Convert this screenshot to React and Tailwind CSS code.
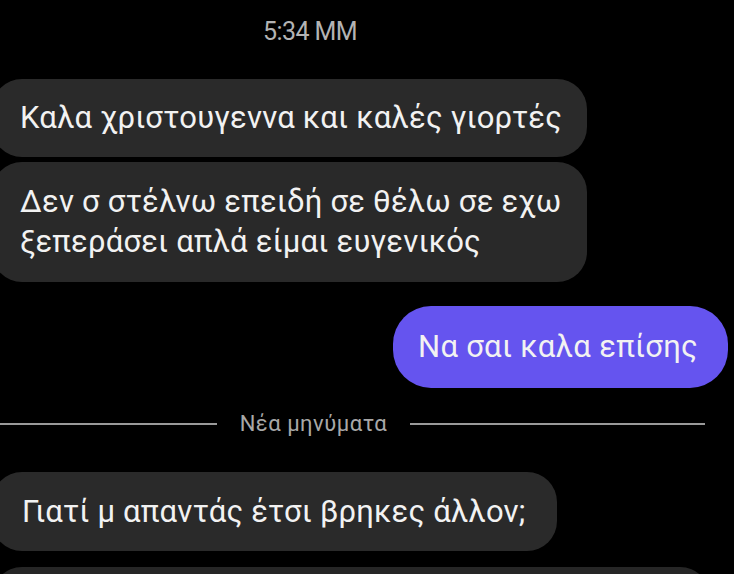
export default function App() {
  const font = { fontFamily: 'Roboto, "Noto Sans", sans-serif' };
  return (
    <div className="w-[734px] h-[574px] bg-black overflow-hidden flex flex-col text-[#f2f2f2]" style={font}>
      <div className="h-[79px] shrink-0 w-[620px] pt-[18px] text-center text-[25px] leading-[28px] text-[#b3b3b3] tracking-[-0.6px]">
        5:34 MM
      </div>
      <div className="ml-[-8px] w-[595px] h-[78px] shrink-0 rounded-[30px] bg-[#2a2a2a] flex items-center pl-[28px] text-[31px] leading-[40px] tracking-[0.2px]">
        Καλα χριστουγεννα και καλές γιορτές
      </div>
      <div className="mt-[5px] ml-[-8px] w-[595px] h-[120px] shrink-0 rounded-[30px] bg-[#292929] flex items-center pl-[28px] pr-[10px] text-[31px] leading-[40px] tracking-[0.2px]">
        <div className="whitespace-nowrap">
          Δεν σ στέλνω επειδή σε θέλω σε εχω
          <br />
          ξεπεράσει απλά είμαι ευγενικός
        </div>
      </div>
      <div className="mt-[24px] self-end mr-[6px] w-[335px] h-[82px] shrink-0 rounded-[38px] bg-[#6554ef] flex items-center pl-[25px] text-[31px] leading-[40px] tracking-[0.3px] whitespace-nowrap">
        Να σαι καλα επίσης
      </div>
      <div className="mt-[26px] h-[20px] shrink-0 flex items-center">
        <div className="w-[217px] h-[2px] bg-[#9a9a9a]" />
        <div className="w-[193px] text-center text-[22px] leading-[20px] text-[#a8a8a8] tracking-[0.5px] whitespace-nowrap">Νέα μηνύματα</div>
        <div className="w-[295px] h-[2px] bg-[#9a9a9a]" />
      </div>
      <div className="mt-[38px] ml-[-8px] w-[565px] h-[79px] shrink-0 rounded-[30px] bg-[#2a2a2a] flex items-center pl-[30px] text-[31px] leading-[40px] tracking-[0.2px] whitespace-nowrap">
        Γιατί μ απαντάς έτσι βρηκες άλλον;
      </div>
      <div className="mt-[16px] ml-[-8px] w-[718px] h-[80px] shrink-0 rounded-[30px] bg-[#262626]" />
    </div>
  );
}
